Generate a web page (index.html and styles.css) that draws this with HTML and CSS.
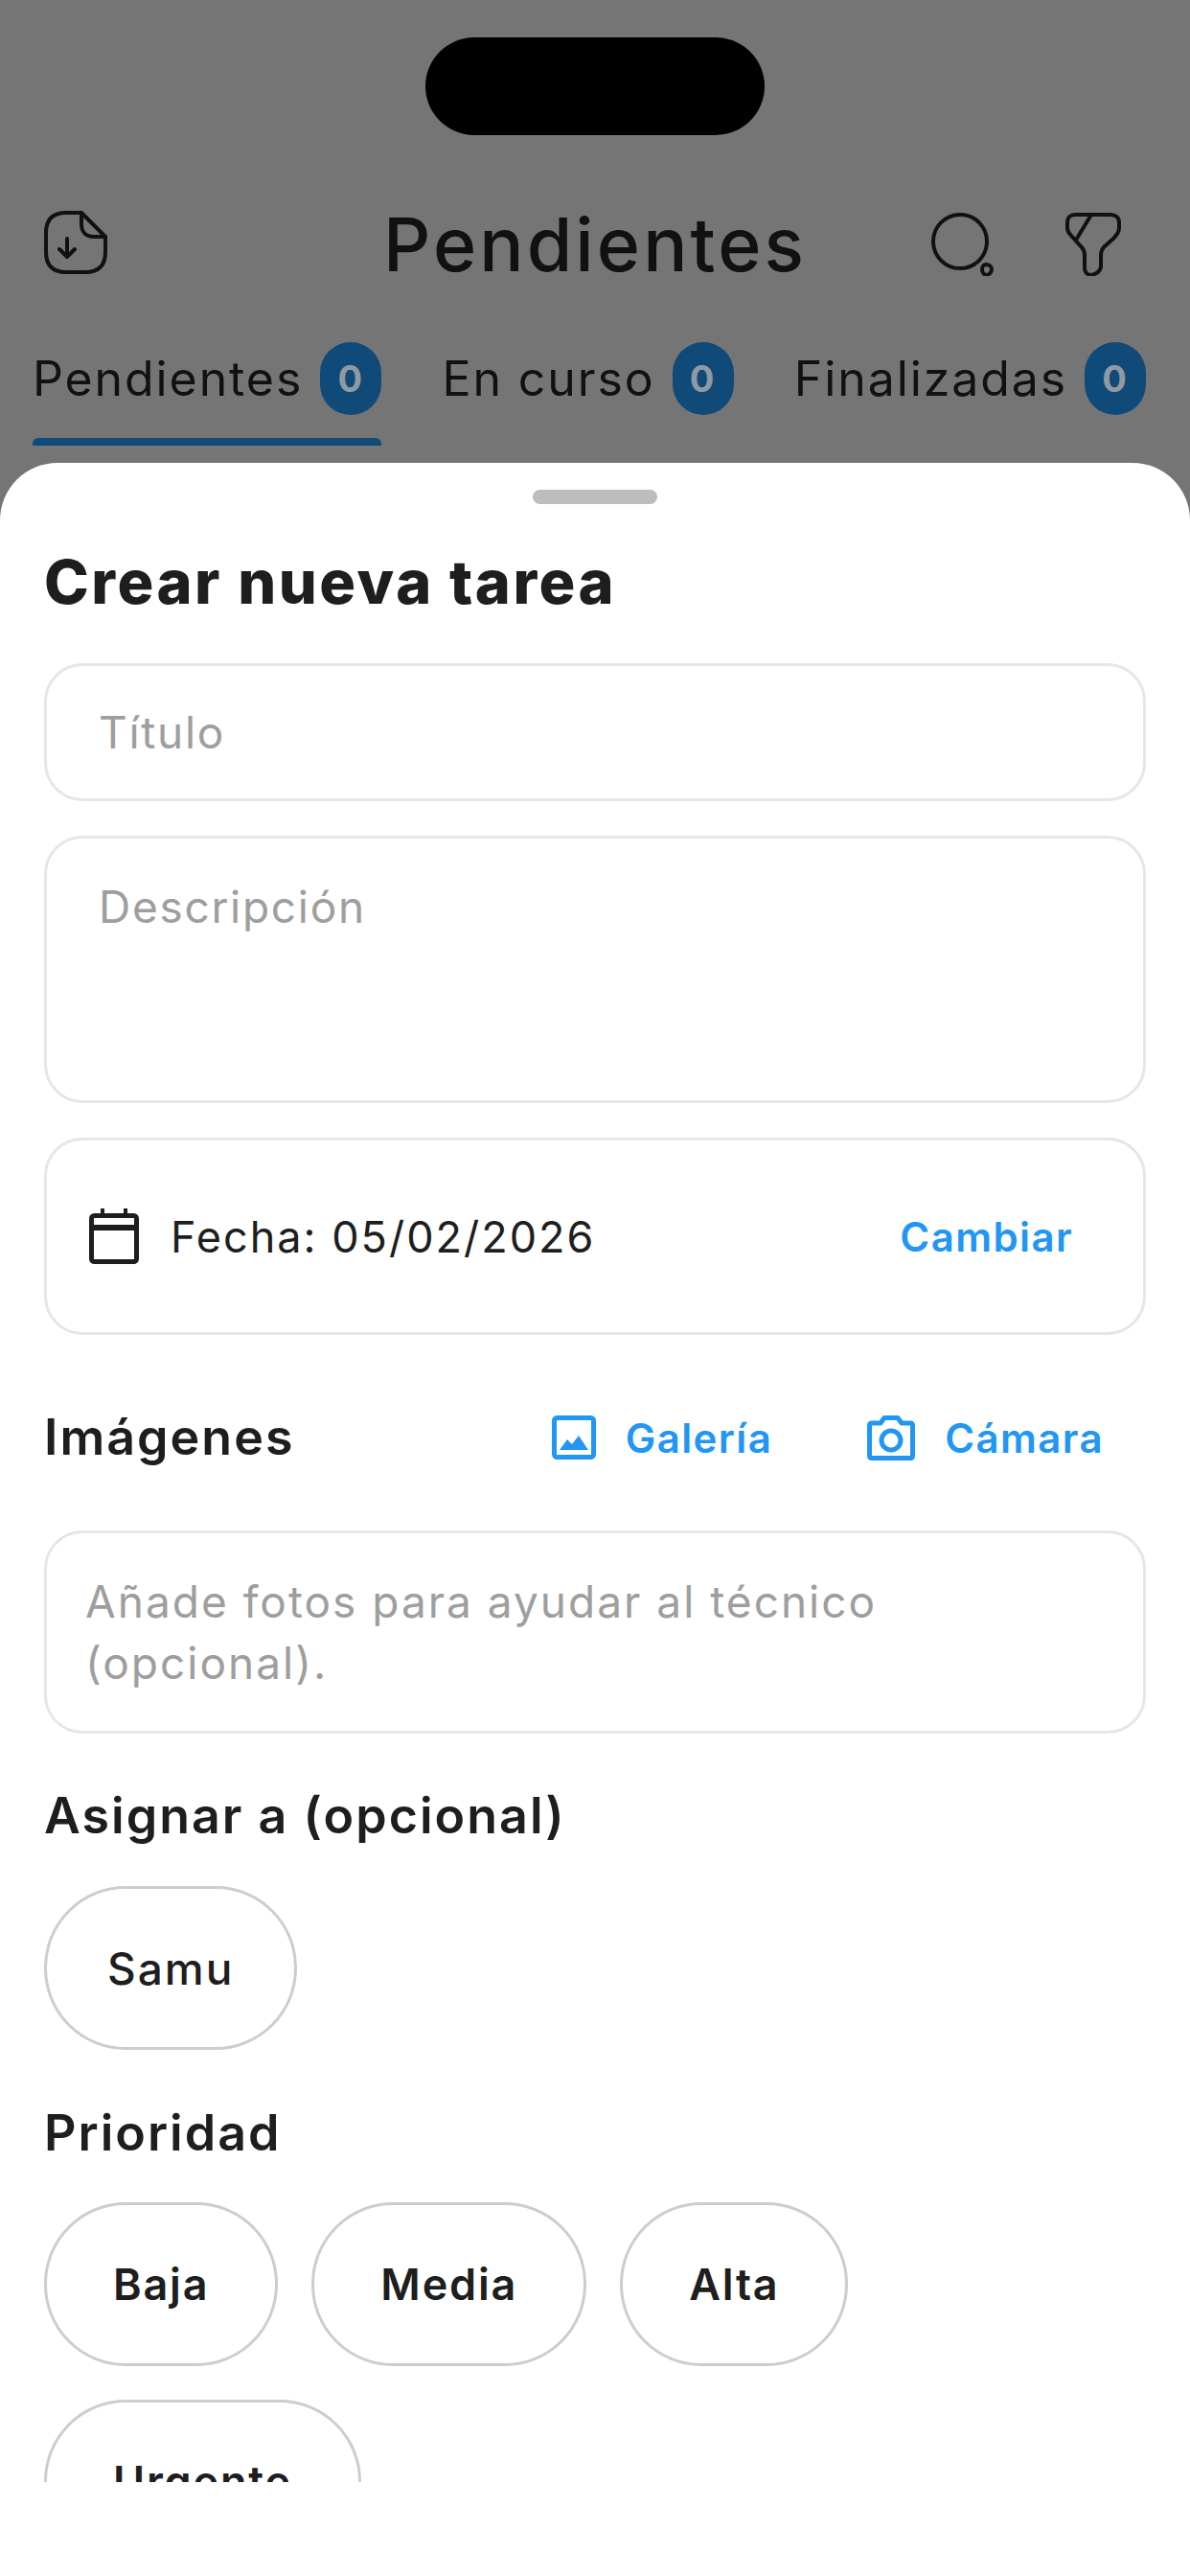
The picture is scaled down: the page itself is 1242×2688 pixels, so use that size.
FILE: index.html
```html
<!DOCTYPE html>
<html lang="es">
<head>
    <meta charset="UTF-8">
    <meta name="viewport" content="width=device-width, initial-scale=1.0">
    <title>Crear nueva tarea</title>
    <link rel="stylesheet" href="styles.css">
</head>
<body>

    <!-- Pantalla de fondo, oscurecida -->
    <div class="backdrop">
        <div class="island"></div>

        <header class="topbar">
            <div class="topbar-left">
                <svg class="icon-doc" width="66" height="66" viewBox="0 0 66 66" fill="none" stroke="#111" stroke-width="4" stroke-linecap="round" stroke-linejoin="round">
                    <path d="M39 2H23C9 2 2 9 2 23V43C2 57 9 64 23 64H43C57 64 64 57 64 43V27Z"/>
                    <path d="M39 2V14C39 22 44 27 52 27H64"/>
                    <path d="M24 29V48M16 40L24 48L32 40"/>
                </svg>
            </div>
            <h1 class="topbar-title">Pendientes</h1>
            <div class="topbar-actions">
                <svg width="70" height="66" viewBox="0 0 70 66" fill="none" stroke="#111" stroke-width="4">
                    <circle cx="30" cy="30" r="28"/>
                    <path d="M57 54C60 54 63 56 63 59C63 62 60 65 58 65C55 65 53 62 53 59C53 56 55 54 57 54Z"/>
                </svg>
                <svg width="58" height="66" viewBox="0 0 58 66" fill="none" stroke="#111" stroke-width="4" stroke-linejoin="round">
                    <path d="M10 2H47C52 2 56 5 56 10V16C56 21 53 24 50 27L41 35C38 38 37 40 37 44V56C37 59 36 60 34 62C31 64 29 65 27 65C22 65 20 61 20 57V44C20 40 19 38 16 35L8 26C4 22 2 20 2 16V10C2 5 5 2 10 2Z"/>
                    <path d="M27 2L10 30"/>
                </svg>
            </div>
        </header>

        <nav class="tabs">
            <div class="tab tab-active">
                <div class="tab-row"><span>Pendientes</span><span class="badge">0</span></div>
                <div class="tab-line"></div>
            </div>
            <div class="tab">
                <div class="tab-row"><span>En curso</span><span class="badge">0</span></div>
            </div>
            <div class="tab">
                <div class="tab-row"><span>Finalizadas</span><span class="badge">0</span></div>
            </div>
        </nav>
    </div>

    <!-- Hoja inferior -->
    <section class="sheet">
        <div class="sheet-handle"></div>
        <div class="sheet-body">
            <h2 class="sheet-title">Crear nueva tarea</h2>

            <input class="field field-title" type="text" placeholder="Título">
            <textarea class="field field-desc" placeholder="Descripción"></textarea>

            <div class="date-card">
                <svg width="52" height="58" viewBox="0 0 52 58" fill="none" stroke="#1e1e1e" stroke-width="5">
                    <rect x="2.500" y="7.500" width="47" height="48" rx="3"/>
                    <path d="M2 20H50" stroke-width="6"/>
                    <path d="M14 0V8M38 0V8" stroke-width="4"/>
                </svg>
                <span class="date-text">Fecha: 05/02/2026</span>
                <span class="link date-change">Cambiar</span>
            </div>

            <div class="images-row">
                <h3 class="label">Imágenes</h3>
                <div class="images-actions">
                    <div class="image-action">
                        <svg width="46" height="46" viewBox="0 0 46 46" fill="none">
                            <rect x="2.500" y="2.500" width="41" height="41" rx="3" stroke="#2196f3" stroke-width="5"/>
                            <path d="M8 36L16 25L21 30L28 21L38 36Z" fill="#2196f3"/>
                        </svg>
                        <span class="link">Galería</span>
                    </div>
                    <div class="image-action">
                        <svg width="50" height="47" viewBox="0 0 50 47" fill="none" stroke="#2196f3" stroke-width="5" stroke-linejoin="round">
                            <path d="M5 8H14L18 2.500H32L36 8H45C46.500 8 47.500 9 47.500 10.500V42C47.500 43.500 46.500 44.500 45 44.500H5C3.500 44.500 2.500 43.500 2.500 42V10.500C2.500 9 3.500 8 5 8Z"/>
                            <circle cx="25" cy="26" r="10"/>
                        </svg>
                        <span class="link">Cámara</span>
                    </div>
                </div>
            </div>

            <div class="note">Añade fotos para ayudar al técnico (opcional).</div>

            <h3 class="label label-assign">Asignar a (opcional)</h3>
            <div class="chips chips-assign">
                <button class="chip chip-light">Samu</button>
            </div>

            <h3 class="label label-priority">Prioridad</h3>
            <div class="chips chips-priority">
                <button class="chip">Baja</button>
                <button class="chip">Media</button>
                <button class="chip">Alta</button>
                <button class="chip">Urgente</button>
            </div>
        </div>
    </section>

</body>
</html>
```

FILE: styles.css
```css
/* Общие стили */
* {
    box-sizing: border-box;
}

body {
    width: 1242px;
    height: 2688px;
    margin: 0;
    overflow: hidden;
    display: flex;
    flex-direction: column;
    font-family: Inter, "Noto Sans", sans-serif;
    background-color: #757575;
    color: #1e1e1e;
}

h1, h2, h3 {
    margin: 0;
}

/* Fondo */
.backdrop {
    height: 483px;
    flex: none;
}

.island {
    width: 354px;
    height: 102px;
    margin: 39px auto 0;
    background-color: #000;
    border-radius: 51px;
}

.topbar {
    display: grid;
    grid-template-columns: 1fr auto 1fr;
    align-items: center;
    height: 66px;
    margin-top: 79px;
    padding: 0 46px;
}

.topbar-title {
    font-size: 77px;
    font-weight: 500;
    line-height: 64px;
    color: #111;
    letter-spacing: 3.1px;
}

.topbar-actions {
    display: flex;
    justify-content: flex-end;
    gap: 70px;
    margin-right: 26px;
}

.tabs {
    display: flex;
    justify-content: space-between;
    margin-top: 71px;
    padding: 0 46px 0 34px;
}

.tab-row {
    display: flex;
    align-items: center;
    gap: 18px;
    height: 76px;
    font-size: 50px;
    letter-spacing: 1.9px;
    color: #111;
}

.badge {
    width: 64px;
    height: 76px;
    border-radius: 32px;
    background-color: #0f4a78;
    color: #8f9aa3;
    font-size: 38px;
    font-weight: 700;
    line-height: 76px;
    text-align: center;
}

.tab-line {
    height: 8px;
    margin-top: 24px;
    background-color: #0f4a78;
    border-radius: 6px 6px 0 0;
}

/* Hoja */
.sheet {
    flex: 1;
    background-color: #fff;
    border-radius: 60px 60px 0 0;
    padding-top: 28px;
}

.sheet-handle {
    width: 130px;
    height: 15px;
    margin: 0 auto;
    background-color: #bdbdbd;
    border-radius: 8px;
}

.sheet-body {
    height: 2064px;
    padding: 0 46px;
    overflow: hidden;
}

.sheet-title {
    margin-top: 41px;
    font-size: 63px;
    font-weight: 800;
    line-height: 80px;
    letter-spacing: 2.5px;
}

.field {
    display: block;
    width: 100%;
    border: 3px solid #e6e6e6;
    border-radius: 40px;
    padding: 0 54px;
    font-family: inherit;
    font-size: 46px;
    letter-spacing: 1.7px;
    background-color: #fff;
    resize: none;
    outline: none;
}

.field::placeholder {
    color: #9e9e9e;
    opacity: 1;
}

.field-title {
    height: 144px;
    margin-top: 45px;
}

.field-desc {
    height: 279px;
    margin-top: 36px;
    padding-top: 43px;
}

.date-card {
    display: flex;
    align-items: center;
    height: 206px;
    margin-top: 36px;
    padding: 0 73px 0 44px;
    border: 3px solid #e6e6e6;
    border-radius: 40px;
}

.date-text {
    margin-left: 33px;
    font-size: 45px;
    letter-spacing: 2px;
}

.date-change {
    margin-left: auto;
}

.link {
    font-size: 42px;
    font-weight: 600;
    letter-spacing: 1.4px;
    color: #2196f3;
}

.images-row {
    display: flex;
    align-items: center;
    justify-content: space-between;
    height: 80px;
    margin-top: 67px;
}

.images-actions {
    display: flex;
    gap: 99px;
    margin-right: 44px;
}

.image-action {
    display: flex;
    align-items: center;
    gap: 31px;
}

.label {
    font-size: 52px;
    font-weight: 600;
    line-height: 60px;
    letter-spacing: 2px;
}

.note {
    height: 212px;
    margin-top: 57px;
    padding: 39px 40px 0;
    border: 3px solid #e6e6e6;
    border-radius: 40px;
    font-size: 46px;
    line-height: 64px;
    letter-spacing: 2px;
    color: #9e9e9e;
}

.label-assign {
    margin-top: 56px;
}

.chips {
    display: flex;
    flex-wrap: wrap;
    gap: 35px;
}

.chips-assign {
    margin-top: 43px;
}

.label-priority {
    margin-top: 57px;
}

.chips-priority {
    margin-top: 42px;
}

.chip {
    height: 171px;
    padding: 0 69px;
    background-color: #fff;
    border: 3px solid #cdcdcd;
    border-radius: 85px;
    font-family: inherit;
    font-size: 45px;
    font-weight: 600;
    letter-spacing: 1.8px;
    color: #1e1e1e;
}

.chip-light {
    padding: 0 63px;
    font-size: 46px;
    letter-spacing: 2px;
    font-weight: 500;
}
```
